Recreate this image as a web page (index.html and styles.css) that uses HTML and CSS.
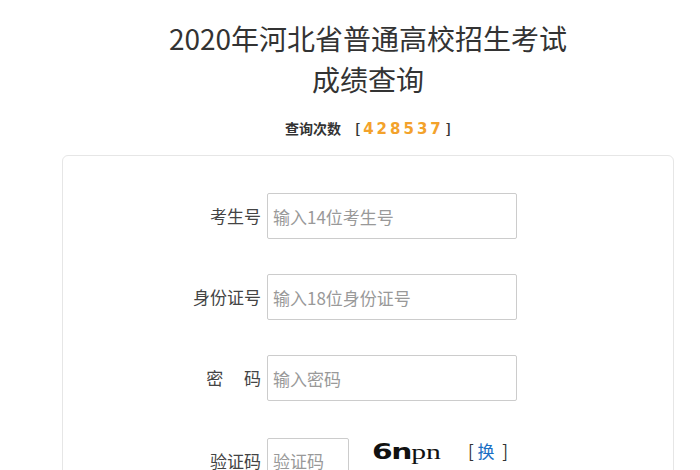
FILE: index.html
```html
<!DOCTYPE html>
<html lang="zh-CN">
<head>
    <meta charset="UTF-8">
    <meta name="viewport" content="width=device-width, initial-scale=1.0">
    <title>成绩查询</title>
    <link rel="stylesheet" href="styles.css">
</head>
<body>
    <div class="container">
        <h1 class="title">2020年河北省普通高校招生考试<br>成绩查询</h1>
        <p class="counter">查询次数<span class="bracket">[</span><span class="count">428537</span>]</p>

        <div class="query-card">
            <div class="form-row">
                <label class="label" for="ksh">考生号</label>
                <input class="input" id="ksh" type="text" placeholder="输入14位考生号">
            </div>
            <div class="form-row">
                <label class="label" for="sfzh">身份证号</label>
                <input class="input" id="sfzh" type="text" placeholder="输入18位身份证号">
            </div>
            <div class="form-row">
                <label class="label" for="mm">密&emsp;&nbsp;码</label>
                <input class="input" id="mm" type="password" placeholder="输入密码">
            </div>
            <div class="form-row">
                <label class="label" for="yzm">验证码</label>
                <input class="input input-code" id="yzm" type="text" placeholder="验证码">
                <span class="captcha"><b>6n</b><i>pn</i></span>
                <a class="refresh" href="#">[&nbsp;<span>换</span>&nbsp;&nbsp;]</a>
            </div>
        </div>
    </div>
</body>
</html>
```

FILE: styles.css
```css
body {
    margin: 0;
    background: #fff;
    font-family: "Noto Sans CJK SC", "Liberation Sans", sans-serif;
    color: #333;
}
.container {
    width: 612px;
    margin-left: 62px;
}
.title {
    margin: 18px 0 0;
    font-size: 28px;
    font-weight: normal;
    line-height: 41px;
    text-align: center;
    color: #333;
}
.counter {
    margin: 18px 0 0;
    font-size: 14px;
    font-weight: bold;
    line-height: 20px;
    text-align: center;
    color: #333;
}
.bracket {
    margin-left: 14px;
    margin-right: 3px;
}
.count {
    font-family: "DejaVu Sans", sans-serif;
    font-size: 15px;
    letter-spacing: 3px;
    margin-right: 2px;
    color: #f3a22b;
}
.query-card {
    margin-top: 16px;
    border: 1px solid #e6e6e6;
    border-radius: 6px;
    padding: 37px 0 40px;
}
.form-row {
    display: flex;
    align-items: center;
    margin-bottom: 35px;
}
.label {
    width: 198px;
    margin-right: 6px;
    text-align: right;
    font-size: 17px;
    line-height: 22px;
    color: #444;
}
.input {
    width: 250px;
    height: 46px;
    box-sizing: border-box;
    border: 1px solid #ccc;
    border-radius: 2px;
    padding: 0 5px;
    font-family: "Noto Sans CJK SC", sans-serif;
    font-size: 17px;
    color: #333;
    outline: none;
}
.input::placeholder {
    color: #999;
}
.input-code {
    width: 82px;
}
.captcha {
    display: inline-block;
    margin: 0 0 20px 23px;
    font-size: 22px;
    line-height: 26px;
    color: #111;
    transform: scaleX(1.35);
    transform-origin: left center;
}
.captcha b {
    font-family: "DejaVu Sans", sans-serif;
    letter-spacing: -1px;
}
.captcha i {
    font-family: "Liberation Serif", serif;
    font-style: normal;
}
.refresh {
    margin: 0 0 20px 45px;
    font-size: 17px;
    line-height: 22px;
    color: #333;
    text-decoration: none;
}
.refresh span {
    color: #1a6fc4;
}
```
